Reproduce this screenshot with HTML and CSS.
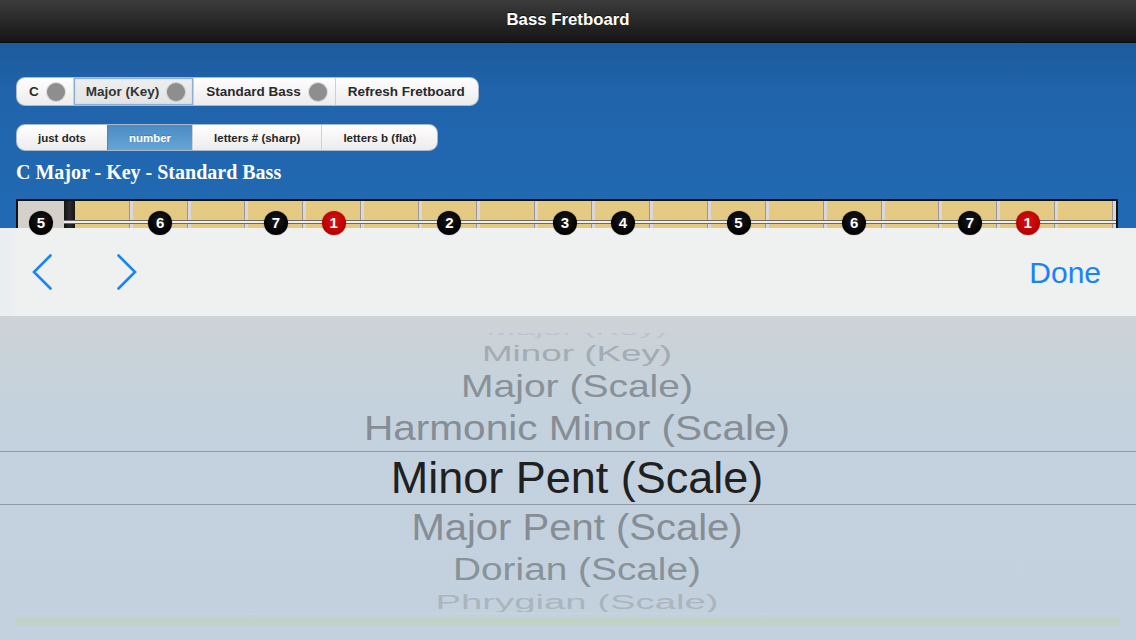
FILE: index.html
```html
<!DOCTYPE html>
<html>
<head>
<meta charset="utf-8">
<title>Bass Fretboard</title>
<link rel="stylesheet" href="styles.css">
</head>
<body>
<div class="app">
  <header class="navbar"><h1>Bass Fretboard</h1></header>
  <main class="content">
    <div class="seg seg-main">
      <div class="seg-item with-knob"><span>C</span><i class="knob"></i></div>
      <div class="seg-item with-knob active"><span>Major (Key)</span><i class="knob"></i></div>
      <div class="seg-item with-knob"><span>Standard Bass</span><i class="knob"></i></div>
      <div class="seg-item"><span>Refresh Fretboard</span></div>
    </div>
    <div class="seg seg-mode">
      <div class="mode-item">just dots</div>
      <div class="mode-item active">number</div>
      <div class="mode-item">letters # (sharp)</div>
      <div class="mode-item">letters b (flat)</div>
    </div>
    <h2 class="scale-title">C Major - Key - Standard Bass</h2>
    <div class="fretboard">
      <div class="open"><span class="dot">5</span></div>
      <div class="nut"></div>
      <div class="fret"></div>
      <div class="fret"><span class="dot">6</span></div>
      <div class="fret"></div>
      <div class="fret"><span class="dot">7</span></div>
      <div class="fret"><span class="dot root">1</span></div>
      <div class="fret"></div>
      <div class="fret"><span class="dot">2</span></div>
      <div class="fret"></div>
      <div class="fret"><span class="dot">3</span></div>
      <div class="fret"><span class="dot">4</span></div>
      <div class="fret"></div>
      <div class="fret"><span class="dot">5</span></div>
      <div class="fret"></div>
      <div class="fret"><span class="dot">6</span></div>
      <div class="fret"></div>
      <div class="fret"><span class="dot">7</span></div>
      <div class="fret"><span class="dot root">1</span></div>
      <div class="fret"></div>
      <div class="string"></div>
    </div>
  </main>
  <section class="sheet">
    <div class="toolbar">
      <svg class="chev" width="20" height="36" viewBox="0 0 20 36"><path d="M18.5 1.5 L2 18 L18.5 34.5" fill="none" stroke="#1a84f9" stroke-width="2.6" stroke-linecap="round"/></svg>
      <svg class="chev chev-next" width="20" height="36" viewBox="0 0 20 36"><path d="M1.5 1.5 L18 18 L1.5 34.5" fill="none" stroke="#1a84f9" stroke-width="2.6" stroke-linecap="round"/></svg>
      <span class="done">Done</span>
    </div>
    <div class="picker">
      <div class="wheel">
        <div class="row r0">Major (Key)</div>
        <div class="row r1">Minor (Key)</div>
        <div class="row r2">Major (Scale)</div>
        <div class="row r3">Harmonic Minor (Scale)</div>
        <div class="row sel">Minor Pent (Scale)</div>
        <div class="row r5">Major Pent (Scale)</div>
        <div class="row r6">Dorian (Scale)</div>
        <div class="row r7">Phrygian (Scale)</div>
      </div>
      <div class="ghost-strip"></div>
    </div>
  </section>
</div>
</body>
</html>
```

FILE: styles.css
```css
* { box-sizing: border-box; }
html, body { margin: 0; padding: 0; }
body { font-family: "Liberation Sans", Arial, sans-serif; background: #2067ae; }

.app {
  position: relative;
  width: 1136px;
  height: 640px;
  overflow: hidden;
  display: flex;
  flex-direction: column;
}

.navbar {
  height: 43px;
  flex: none;
  background: linear-gradient(#3c3c3c 0, #2a2a2a 45%, #151515 100%);
  border-bottom: 1px solid #0c0c0c;
  display: flex;
  align-items: center;
  justify-content: center;
  padding-bottom: 2px;
}
.navbar h1 {
  margin: 0;
  color: #fff;
  font-size: 16.8px;
  font-weight: bold;
  text-shadow: 0 -1px 0 rgba(0,0,0,.6);
}

.content {
  flex: 1;
  background: linear-gradient(#1d5b9c 0, #2064ab 50px, #2169b2 160px);
  padding: 34px 18px 0 16px;
}

.seg {
  display: flex;
  width: max-content;
  overflow: hidden;
}

.seg-main {
  height: 29px;
  border: 1px solid #a8bbd2;
  border-radius: 9px;
  background: linear-gradient(#fefefe, #ececec);
}
.seg-item {
  display: flex;
  align-items: center;
  padding: 0 13px 0 12px;
  font-size: 13.5px;
  font-weight: bold;
  color: #2a2a2a;
  border-left: 1px solid #cfcfcf;
}
.seg-item:first-child { border-left: 0; }
.seg-item.with-knob { padding-right: 8px; }
.seg-item.active {
  background: linear-gradient(#efefef, #e2e3e4);
  box-shadow: inset 0 0 0 1px #8eaed3, inset 0 0 3px rgba(150,190,235,.9);
  color: #333;
}
.knob {
  width: 18px;
  height: 18px;
  border-radius: 50%;
  background: #8e8e8e;
  margin-left: 8px;
  box-shadow: 0 0 0 1px rgba(120,120,120,.25);
}

.seg-mode {
  margin-top: 18px;
  height: 27px;
  border: 1px solid #a9b8cb;
  border-radius: 9px;
  background: linear-gradient(#ffffff, #ececec);
}
.mode-item {
  display: flex;
  align-items: center;
  padding: 0 21px;
  font-size: 11.5px;
  font-weight: bold;
  color: #262626;
  border-left: 1px solid #d0d0d0;
}
.mode-item:first-child { border-left: 0; }
.mode-item.active {
  background: linear-gradient(#4a8bc3, #67a5d6);
  color: #fff;
  border-left-color: #4a86bb;
  text-shadow: 0 -1px 0 rgba(0,0,0,.2);
}

.scale-title {
  margin: 9px 0 0;
  font-family: "Liberation Serif", "Times New Roman", serif;
  font-size: 20px;
  line-height: 24px;
  font-weight: bold;
  color: #fff;
}

.fretboard {
  position: relative;
  margin-top: 15px;
  height: 140px;
  border: 2px solid #111;
  display: flex;
  background: #e2c77f;
}
.open {
  width: 46px;
  flex: none;
  background: #d4d1ca;
  display: flex;
  flex-direction: column;
  align-items: center;
  padding-top: 10px;
}
.nut {
  width: 11px;
  flex: none;
  background: linear-gradient(90deg, #151515, #2a2a2a 50%, #161616);
}
.fret {
  flex: 1;
  background: linear-gradient(180deg, #e5ca83, #dfc37a);
  border-right: 3px solid #d9d7dc;
  box-shadow: inset -1px 0 0 #9c968e;
  display: flex;
  flex-direction: column;
  align-items: center;
  padding-top: 10px;
}
.string {
  position: absolute;
  left: 46px;
  right: 0;
  top: 19px;
  height: 4px;
  border-top: 1px solid #6a6a6a;
  border-bottom: 1px solid #6a6a6a;
  background: #f1efea;
  z-index: 0;
}
.dot {
  position: relative;
  z-index: 1;
  width: 24px;
  height: 24px;
  border-radius: 50%;
  background: radial-gradient(circle at 50% 40%, #1a1a1a, #000 70%);
  color: #fff;
  font-size: 15px;
  font-weight: bold;
  line-height: 24px;
  text-align: center;
  box-shadow: 0 0 1px rgba(0,0,0,.6);
}
.dot.root {
  background: radial-gradient(circle at 50% 40%, #d81010, #b80000 70%);
}

.sheet {
  position: absolute;
  left: 0;
  right: 0;
  top: 228px;
  bottom: 0;
  display: flex;
  flex-direction: column;
}
.toolbar {
  height: 88px;
  flex: none;
  background: linear-gradient(90deg, #e9eef2 0, #eff0f0 20px, #eff0f0 100%);
  display: flex;
  align-items: center;
  padding: 0 35px 0 32px;
}
.chev { display: block; }
.chev-next { margin-left: 65px; }
.done {
  margin-left: auto;
  font-size: 30px;
  color: #1883f8;
  line-height: 1;
  padding-top: 2px;
}

.picker {
  flex: 1;
  background: linear-gradient(180deg, #ced3d6 0, #c9d2d9 40px, #c4d2de 90px, #c3d1de 100%);
  padding-top: 17px;
}
.wheel {
  height: 279px;
  overflow: hidden;
  padding-left: 18px;
}
.row {
  text-align: center;
  white-space: nowrap;
  color: #878e95;
}
.r0 { margin-top: -14px; height: 21px; line-height: 21px; font-size: 35px; transform: scaleY(.42); color: #bcc4cb; }
.r1 { height: 27px; line-height: 25px; font-size: 36.8px; transform: scaleY(.62); color: #a3acb4; }
.r2 { height: 39px; line-height: 39px; font-size: 39px; transform: scaleY(.8); color: #899198; }
.r3 { height: 45px; line-height: 45px; font-size: 40.6px; transform: scaleY(.87); color: #868d94; }
.sel {
  height: 54px;
  line-height: 52px;
  font-size: 45px;
  color: #202020;
  border-top: 1px solid #8f9aa5;
  border-bottom: 1px solid #8f9aa5;
  margin-left: -18px;
  padding-left: 18px;
}
.r5 { height: 44px; line-height: 44px; font-size: 40px; transform: scaleY(.94); color: #868d94; }
.r6 { height: 42px; line-height: 42px; font-size: 38.8px; transform: scaleY(.8); color: #899299; }
.r7 { height: 21px; line-height: 21px; font-size: 38.3px; transform: scaleY(.55); color: #abb5be; }

.ghost-strip {
  margin: 1px 16px 0 16px;
  height: 14px;
  background: linear-gradient(180deg, #c9d8c8 0, #c9d8c8 1px, transparent 1px, transparent 4px, #c1d3c6 4px, #c1d3c6 13px, transparent 13px);
}
```
